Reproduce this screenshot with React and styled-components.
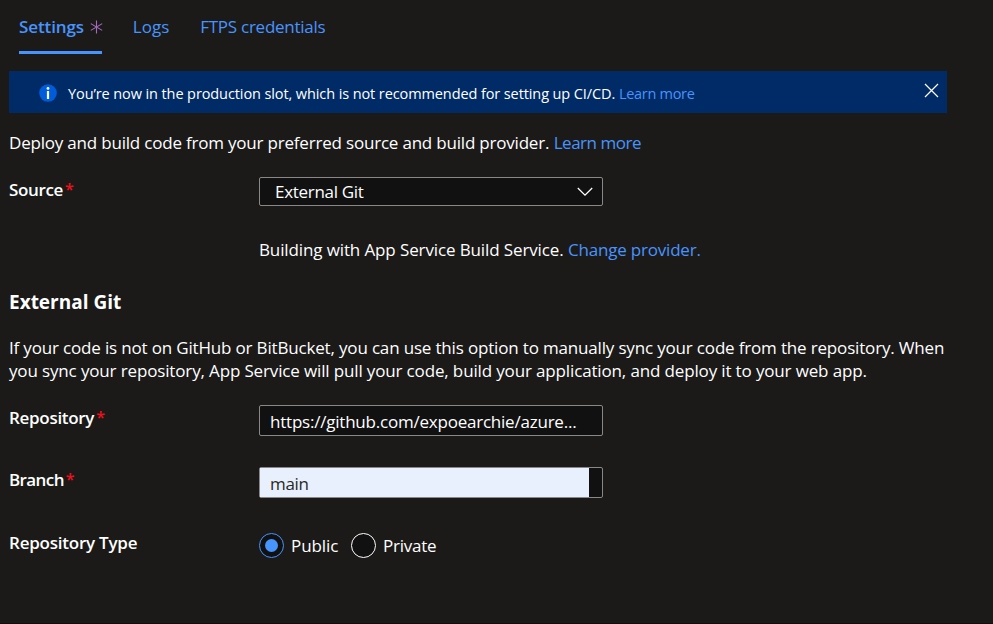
import React from "react";
import styled, { createGlobalStyle } from "styled-components";

const GlobalStyle = createGlobalStyle`
  *, *::before, *::after { box-sizing: border-box; }
  body {
    margin: 0;
    background: #1b1a19;
    color: #ffffff;
    font-family: "Open Sans", "Noto Sans", sans-serif;
    font-size: 17px;
    line-height: 23px;
  }
`;

const Page = styled.main`
  display: flex;
  flex-direction: column;
  height: 624px;
  padding-left: 9px;
  overflow: hidden;
  border-bottom: 1px solid #100f10;
`;

const Text = styled.span`
  letter-spacing: ${(p) => p.$track || 0}px;
  white-space: nowrap;
`;

const Link = styled.a`
  color: #4894fe;
  letter-spacing: ${(p) => p.$track || 0}px;
  white-space: nowrap;
  text-decoration: none;
  cursor: pointer;
`;

const Tabs = styled.nav`
  display: flex;
  gap: 30.7px;
  height: 54px;
  padding-left: 10px;
`;

const Tab = styled.a`
  display: flex;
  gap: 6px;
  width: ${(p) => (p.$active ? "83px" : "auto")};
  height: 54px;
  padding-top: 15px;
  color: #4894fe;
  font-weight: ${(p) => (p.$active ? 600 : 400)};
  border-bottom: 3px solid ${(p) => (p.$active ? "#4894fe" : "transparent")};
  svg { flex: none; margin-top: 5px; }
`;

const Banner = styled.section`
  display: flex;
  width: 938px;
  height: 42px;
  margin-top: 17px;
  padding: 12px 8px 0 30px;
  background: #002b66;
  font-size: 14.5px;
  line-height: 20px;
`;

const InfoIcon = styled.svg`
  flex: none;
  margin: 1px 11px 0 0;
`;

const BannerText = styled.div`
  flex: 1;
  padding-top: 1px;
  white-space: nowrap;
`;

const CloseButton = styled.button`
  width: 15px;
  height: 15px;
  padding: 0;
  border: 0;
  background: none;
  display: flex;
`;

const Intro = styled.p`
  margin: 18px 0 0;
  white-space: nowrap;
`;

const Row = styled.div`
  display: grid;
  grid-template-columns: 250px 344px;
  align-items: start;
  margin-top: ${(p) => p.$gap}px;
`;

const Label = styled.label`
  display: flex;
  gap: 2px;
  padding-top: ${(p) => p.$top ?? 1}px;
  font-weight: 600;
`;

const Required = styled.span`
  color: #f0101c;
  font-size: 16px;
  font-weight: 600;
`;

const Field = styled.div`
  display: flex;
  align-items: flex-start;
  height: 31px;
  border: 1px solid #8a8886;
  border-radius: 2px;
  background: #111111;
`;

const Select = styled(Field)`
  height: 29px;
  justify-content: space-between;
  padding: 2px 9px 0 15px;
  svg { margin-top: 4px; }
`;

const FieldValue = styled.div`
  width: 329px;
  height: 29px;
  padding: 4px 0 0 10px;
  background: ${(p) => (p.$filled ? "#e8f0fe" : "transparent")};
  color: ${(p) => (p.$filled ? "#292827" : "#ffffff")};
`;

const Hint = styled.p`
  margin: 32px 0 0 250px;
  white-space: nowrap;
`;

const Heading = styled.h2`
  margin: 28px 0 0;
  font-size: 19px;
  line-height: 26px;
  font-weight: 700;
`;

const Description = styled.p`
  display: flex;
  flex-direction: column;
  margin: 21px 0 0;
`;

const Radios = styled.div`
  display: grid;
  grid-template-columns: 92px auto;
  padding-top: 2px;
`;

const Radio = styled.label`
  display: flex;
  gap: 7px;
  padding-bottom: 1px;
  ${Text} { padding-top: 1px; }
`;

const RadioCircle = styled.span`
  display: flex;
  flex: none;
  align-items: center;
  justify-content: center;
  width: 25px;
  height: 25px;
  border-radius: 50%;
  border: 1px solid ${(p) => (p.$checked ? "#4894fe" : "#ffffff")};
  background: #111111;
  &::after {
    content: "";
    width: 13px;
    height: 13px;
    border-radius: 50%;
    background: ${(p) => (p.$checked ? "#4894fe" : "transparent")};
  }
`;

function RadioOption({ checked, track, children }) {
  return (
    <Radio>
      <RadioCircle $checked={checked} />
      <Text $track={track}>{children}</Text>
    </Radio>
  );
}

export default function App() {
  return (
    <>
      <GlobalStyle />
      <Page>
        <Tabs>
          <Tab $active>
            <Text $track={-0.1}>Settings</Text>
            <svg width="13" height="14" viewBox="0 0 13 14" fill="none" stroke="#a56bc0" strokeWidth="1.1">
              <path d="M6.5 0.5V13.5M0.8 3.6L12.2 10.4M12.2 3.6L0.8 10.4" />
            </svg>
          </Tab>
          <Tab><Text $track={0.1}>Logs</Text></Tab>
          <Tab><Text $track={-0.26}>FTPS credentials</Text></Tab>
        </Tabs>

        <Banner>
          <InfoIcon width="18" height="18" viewBox="0 0 18 18">
            <circle cx="9" cy="9" r="8.8" fill="#015cda" />
            <circle cx="9" cy="4.4" r="1.4" fill="#fff" />
            <rect x="7.9" y="7" width="2.2" height="8" fill="#fff" />
          </InfoIcon>
          <BannerText>
            <Text $track={-0.1}>You’re now in the production slot, which is not recommended for setting up CI/CD.</Text>{" "}
            <Link $track={-0.3}>Learn more</Link>
          </BannerText>
          <CloseButton aria-label="Close">
            <svg width="15" height="15" viewBox="0 0 15 15" fill="none" stroke="#fff" strokeWidth="1.2">
              <path d="M1 1L14 14M14 1L1 14" />
            </svg>
          </CloseButton>
        </Banner>

        <Intro>
          <Text $track={-0.2}>Deploy and build code from your preferred source and build provider.</Text>{" "}
          <Link $track={-0.47}>Learn more</Link>
        </Intro>

        <Row $gap={23}>
          <Label><Text $track={-0.35}>Source</Text><Required>*</Required></Label>
          <Select>
            <Text $track={-0.3}>External Git</Text>
            <svg width="16" height="16" viewBox="0 0 16 16" fill="none" stroke="#fff" strokeWidth="1.3">
              <path d="M0.8 4L8 11.2L15.2 4" />
            </svg>
          </Select>
        </Row>

        <Hint>
          <Text $track={-0.12}>Building with App Service Build Service.</Text>{" "}
          <Link $track={-0.2}>Change provider.</Link>
        </Hint>

        <Heading>External Git</Heading>
        <Description>
          <Text $track={-0.17}>
            If your code is not on GitHub or BitBucket, you can use this option to manually sync your code from the repository. When
          </Text>
          <Text $track={-0.145}>
            you sync your repository, App Service will pull your code, build your application, and deploy it to your web app.
          </Text>
        </Description>

        <Row $gap={23}>
          <Label><Text $track={-0.3}>Repository</Text><Required>*</Required></Label>
          <Field><FieldValue><Text $track={-0.22}>https://github.com/expoearchie/azure...</Text></FieldValue></Field>
        </Row>

        <Row $gap={31}>
          <Label><Text $track={-0.6}>Branch</Text><Required>*</Required></Label>
          <Field><FieldValue $filled><Text $track={-0.3}>main</Text></FieldValue></Field>
        </Row>

        <Row $gap={33}>
          <Label $top={0}><Text $track={-0.23}>Repository Type</Text></Label>
          <Radios>
            <RadioOption checked track={-0.08}>Public</RadioOption>
            <RadioOption track={-0.25}>Private</RadioOption>
          </Radios>
        </Row>
      </Page>
    </>
  );
}
